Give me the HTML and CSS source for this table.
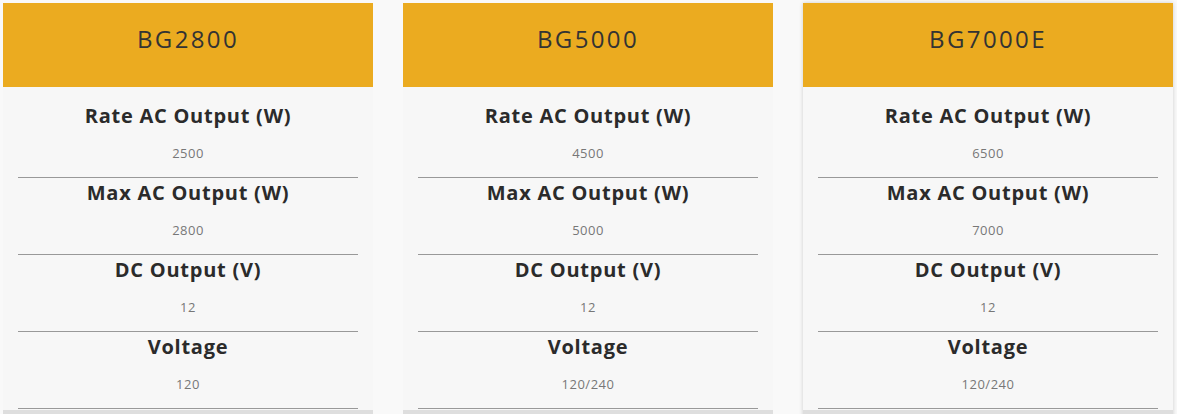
FILE: index.html
```html
<!DOCTYPE html>
<html>
<head>
<meta charset="utf-8">
<link rel="stylesheet" href="styles.css">
</head>
<body>
<div class="cards">
  <div class="card">
    <div class="card-head">BG2800</div>
    <div class="card-body">
      <div class="spec"><div class="label">Rate AC Output (W)</div><div class="value">2500</div></div>
      <div class="spec"><div class="label">Max AC Output (W)</div><div class="value">2800</div></div>
      <div class="spec"><div class="label">DC Output (V)</div><div class="value">12</div></div>
      <div class="spec"><div class="label">Voltage</div><div class="value">120</div></div>
    </div>
    <div class="card-foot"></div>
  </div>
  <div class="card">
    <div class="card-head">BG5000</div>
    <div class="card-body">
      <div class="spec"><div class="label">Rate AC Output (W)</div><div class="value">4500</div></div>
      <div class="spec"><div class="label">Max AC Output (W)</div><div class="value">5000</div></div>
      <div class="spec"><div class="label">DC Output (V)</div><div class="value">12</div></div>
      <div class="spec"><div class="label">Voltage</div><div class="value">120/240</div></div>
    </div>
    <div class="card-foot"></div>
  </div>
  <div class="card card-active">
    <div class="card-head">BG7000E</div>
    <div class="card-body">
      <div class="spec"><div class="label">Rate AC Output (W)</div><div class="value">6500</div></div>
      <div class="spec"><div class="label">Max AC Output (W)</div><div class="value">7000</div></div>
      <div class="spec"><div class="label">DC Output (V)</div><div class="value">12</div></div>
      <div class="spec"><div class="label">Voltage</div><div class="value">120/240</div></div>
    </div>
    <div class="card-foot"></div>
  </div>
</div>
</body>
</html>
```
FILE: styles.css
```css
html, body {
  margin: 0;
  background: #f9f9f9;
}
body {
  padding: 3px;
  font-family: "Open Sans", "Liberation Sans", sans-serif;
  color: #333;
  overflow: hidden;
}
.cards {
  display: flex;
  gap: 30px;
  align-items: flex-start;
}
.card {
  width: 370px;
  background: #f7f7f7;
}
.card-active {
  box-shadow: 0 0 4px rgba(0,0,0,0.18);
}
.card-head {
  height: 84px;
  background: #ebab20;
  display: flex;
  align-items: center;
  justify-content: center;
  font-size: 24px;
  font-weight: 400;
  color: #333;
  padding-bottom: 13px;
  box-sizing: border-box;
  letter-spacing: 2.4px;
}
.card-body {
  padding: 14px 15px 1px;
}
.spec {
  padding: 3px 0 14px;
  border-bottom: 1px solid #999;
  text-align: center;
}
.label {
  height: 24px;
  line-height: 24px;
  font-size: 20px;
  font-weight: 700;
  color: #2b2b2b;
  letter-spacing: 0.75px;
}
.value {
  margin-top: 15px;
  height: 20px;
  line-height: 20px;
  font-size: 13px;
  color: #777;
  letter-spacing: 0.5px;
}
.card-foot {
  height: 8px;
  background: #dedede;
}
```
